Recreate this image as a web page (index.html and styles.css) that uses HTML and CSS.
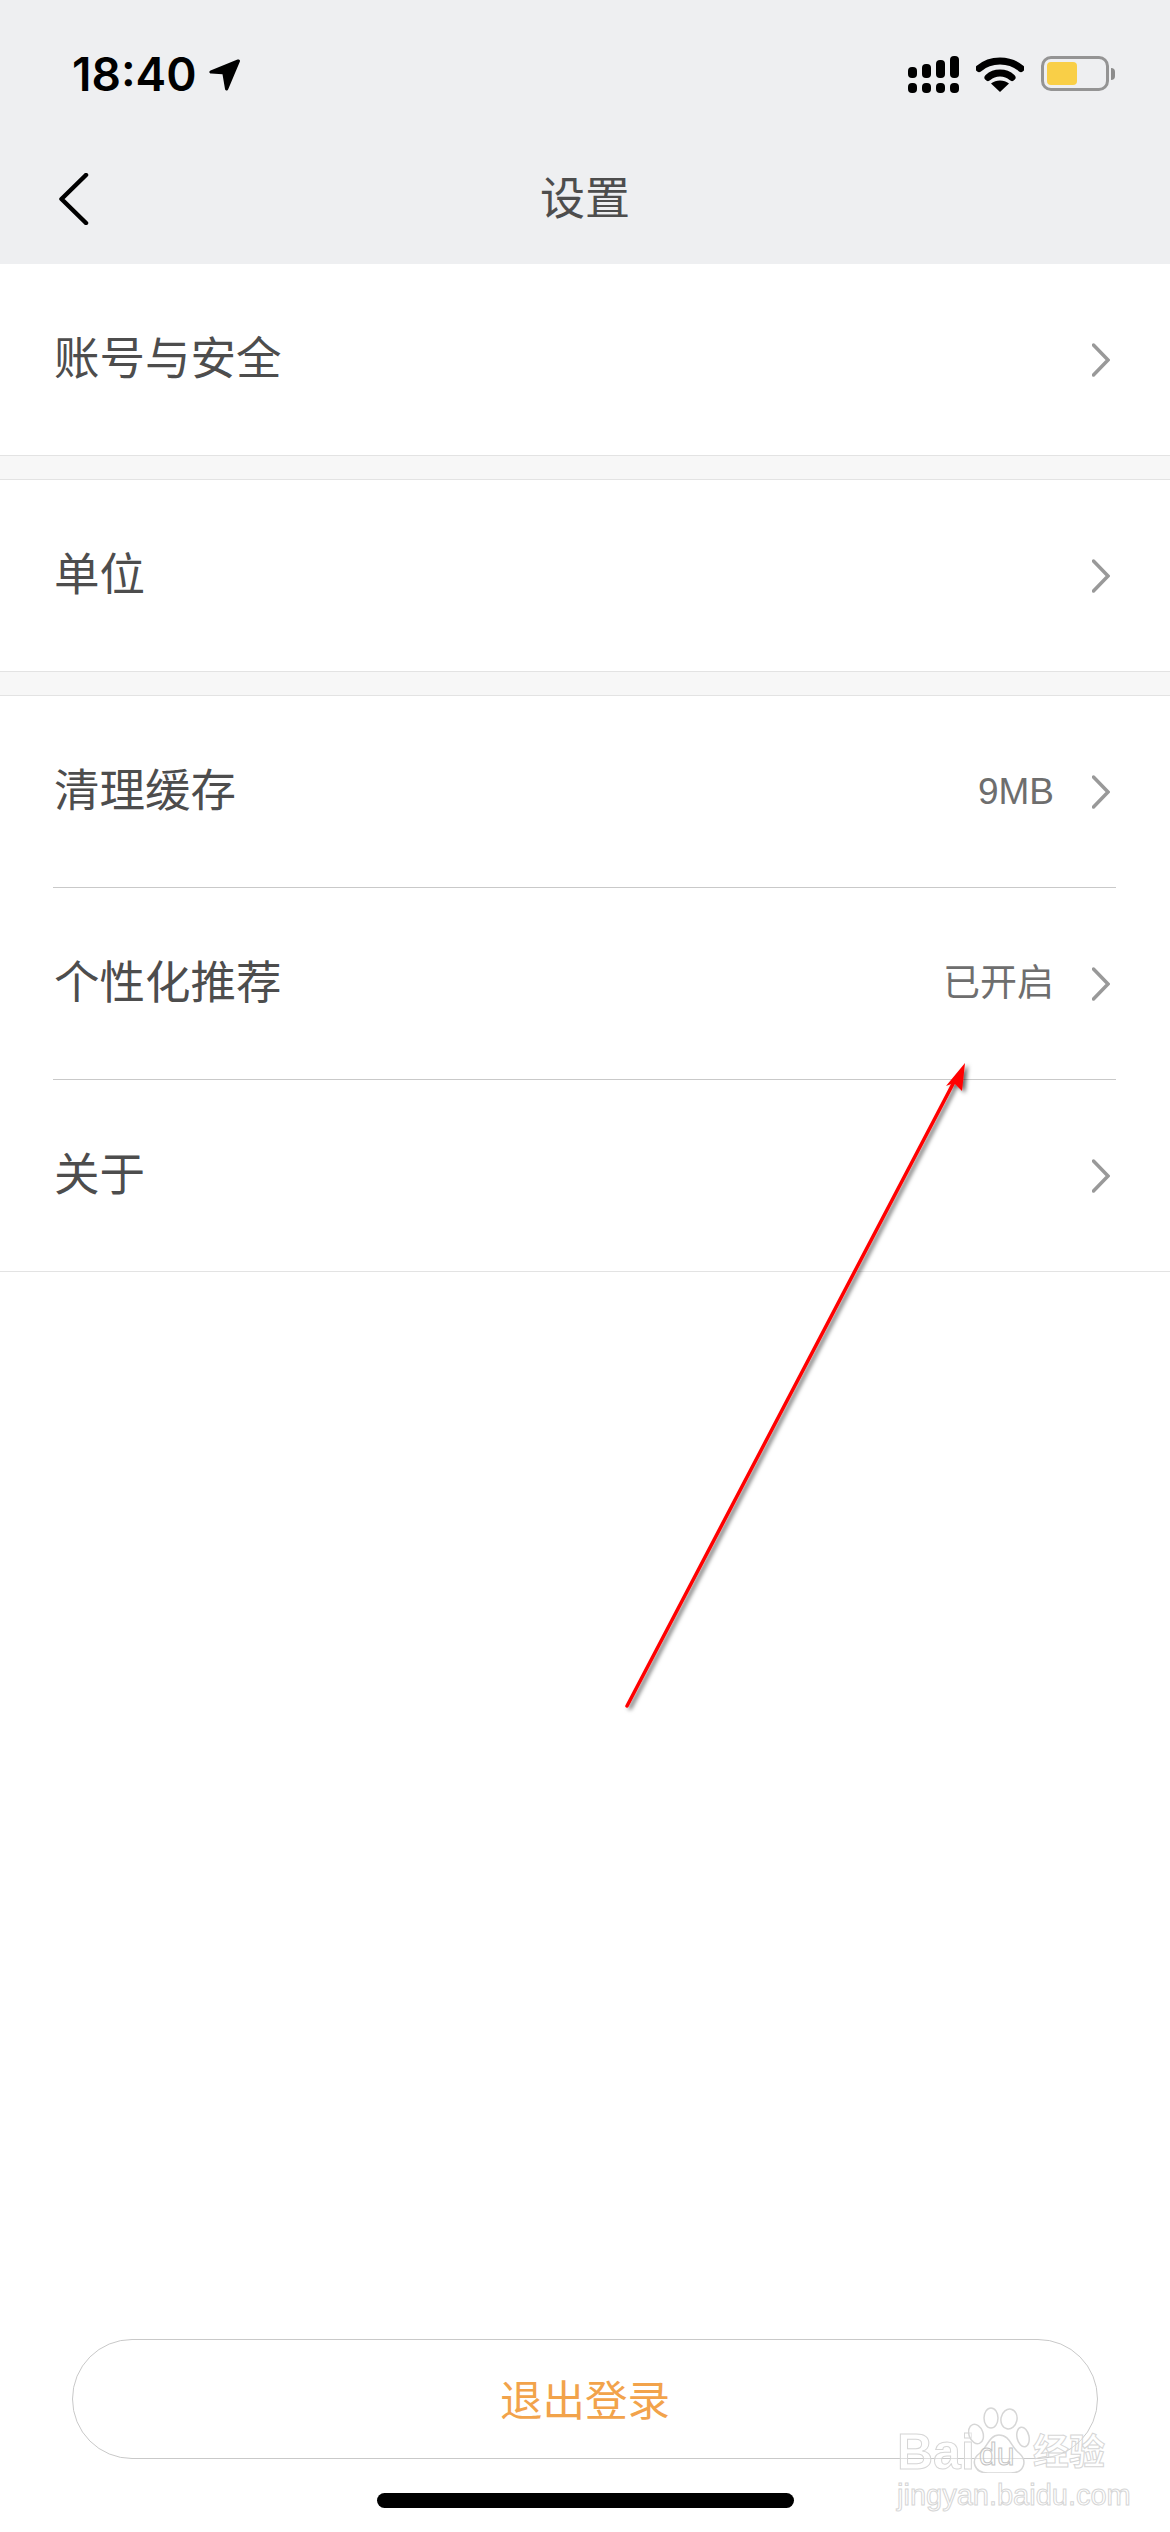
FILE: index.html
```html
<!DOCTYPE html>
<html lang="zh-CN">

<head>
    <meta charset="UTF-8">
    <meta name="viewport" content="width=device-width, initial-scale=1.0">
    <title>设置</title>
    <link rel="stylesheet" href="styles.css">
</head>

<body>
    <header class="top">
        <div class="status">
            <div class="status-left">
                <span class="time">18:40</span>
                <svg class="loc" viewBox="0 0 31 32" width="31" height="32">
                    <path d="M28.500.6 1.500 11.500c-1.900.8-1.400 3 .6 3.100l11.400.6 2.500 14.800c.3 1.900 2.600 2 3.200.2L30.900 2.600C31.400 1 30 0 28.500.6Z" />
                </svg>
            </div>
            <div class="status-right">
                <svg class="signal" viewBox="0 0 51 37" width="51" height="37">
                    <rect x="0" y="11" width="9" height="11" rx="4" />
                    <rect x="14" y="8" width="9" height="14" rx="4" />
                    <rect x="28" y="4" width="9" height="18" rx="4" />
                    <rect x="42" y="0" width="9" height="22" rx="4" />
                    <rect x="0" y="27" width="9" height="10" rx="4" />
                    <rect x="14" y="27" width="9" height="10" rx="4" />
                    <rect x="28" y="27" width="9" height="10" rx="4" />
                    <rect x="42" y="27" width="9" height="10" rx="4" />
                </svg>
                <svg class="wifi" viewBox="0 0 48 36" width="48" height="36">
                    <path d="M3 12.500C14.500 2.500 33.500 2.500 45 12.500" />
                    <path d="M12 21.500C18.500 15.500 29.500 15.500 36 21.500" />
                    <path class="wifi-dot" d="M24 36 15 27.500C20 23.500 28 23.500 33 27.500Z" />
                </svg>
                <div class="battery">
                    <div class="battery-body"><div class="battery-fill"></div></div>
                    <div class="battery-nub"></div>
                </div>
            </div>
        </div>
        <nav class="bar">
            <svg class="back" viewBox="0 0 30 52" width="30" height="52">
                <path d="M27 2 2.500 26 27 50" />
            </svg>
            <span class="bar-title">设置</span>
        </nav>
    </header>

    <section class="group">
        <div class="row">
            <span class="label">账号与安全</span>
            <svg class="chev" viewBox="0 0 18 34" width="18" height="34"><path d="M1.500 2 16 17 1.500 32" /></svg>
        </div>
    </section>
    <div class="gap"></div>
    <section class="group">
        <div class="row">
            <span class="label">单位</span>
            <svg class="chev" viewBox="0 0 18 34" width="18" height="34"><path d="M1.500 2 16 17 1.500 32" /></svg>
        </div>
    </section>
    <div class="gap"></div>
    <section class="group">
        <div class="row line">
            <span class="label">清理缓存</span>
            <span class="value">9MB</span>
            <svg class="chev" viewBox="0 0 18 34" width="18" height="34"><path d="M1.500 2 16 17 1.500 32" /></svg>
        </div>
        <div class="row line">
            <span class="label">个性化推荐</span>
            <span class="value">已开启</span>
            <svg class="chev" viewBox="0 0 18 34" width="18" height="34"><path d="M1.500 2 16 17 1.500 32" /></svg>
        </div>
        <div class="row">
            <span class="label">关于</span>
            <svg class="chev" viewBox="0 0 18 34" width="18" height="34"><path d="M1.500 2 16 17 1.500 32" /></svg>
        </div>
    </section>

    <div class="foot">
        <button class="logout">退出登录</button>
        <div class="home"></div>
    </div>

    <!-- red arrow someone drew on the screenshot -->
    <svg class="mark" viewBox="0 0 1170 2532" width="1170" height="2532">
        <defs>
            <filter id="drop" x="-10%" y="-10%" width="120%" height="120%">
                <feDropShadow dx="3" dy="2" stdDeviation="2" flood-color="#000" flood-opacity="0.6" />
            </filter>
        </defs>
        <g filter="url(#drop)">
            <path class="mark-line" d="M627 1706 955 1080" />
            <path class="mark-head" d="M965 1063 962 1091 954 1083 946 1086Z" />
        </g>
    </svg>

    <div class="wm">
        <div class="wm-top">
            <span class="wm-bai">Bai</span>
            <div class="wm-paw">
                <svg viewBox="0 0 62 66" width="62" height="66">
                    <ellipse cx="8" cy="27" rx="7" ry="10" transform="rotate(-20 8 27)" />
                    <ellipse cx="23" cy="11" rx="7" ry="10" />
                    <ellipse cx="41" cy="12" rx="8" ry="10" transform="rotate(12 41 12)" />
                    <ellipse cx="55" cy="30" rx="6" ry="10" transform="rotate(-12 55 30)" />
                    <path d="M31 28C21 28 19 41 12 46 2 53 6 66 20 66 27 66 35 66 43 66 56 66 60 54 51 46 43 40 42 28 31 28Z" />
                </svg>
                <span class="wm-du">du</span>
            </div>
            <span class="wm-cn">经验</span>
        </div>
        <div class="wm-url">jingyan.baidu.com</div>
    </div>
</body>

</html>
```

FILE: styles.css
```css
* {
    margin: 0;
    box-sizing: border-box;
}

body {
    width: 1170px;
    height: 2532px;
    background-color: #ffffff;
    color: #4d4d4d;
    font-family: "Liberation Sans", "Noto Sans CJK SC", sans-serif;
    display: flex;
    flex-direction: column;
    position: relative;
    overflow: hidden;
}

.top {
    height: 264px;
    background-color: #eeeff1;
    flex-shrink: 0;
}

.status {
    height: 148px;
    padding: 56px 55px 0 72px;
    display: flex;
    justify-content: space-between;
    align-items: flex-start;
}

.status-left {
    display: flex;
    align-items: center;
    gap: 12px;
}

.time {
    font-family: Inter, sans-serif;
    font-size: 46px;
    font-weight: 600;
    line-height: 37px;
    color: #000;
}

.loc path {
    fill: #000;
}

.status-right {
    display: flex;
    align-items: flex-start;
    gap: 17px;
}

.signal rect {
    fill: #000;
}

.wifi path {
    fill: none;
    stroke: #000;
    stroke-width: 7px;
    stroke-linecap: round;
}

.wifi .wifi-dot {
    fill: #000;
    stroke: none;
}

.battery {
    display: flex;
    align-items: center;
    gap: 2px;
}

.battery-body {
    width: 68px;
    height: 35px;
    border: 3px solid #949494;
    border-radius: 10px;
    padding: 3px;
}

.battery-fill {
    width: 30px;
    height: 100%;
    background-color: #f9cf47;
    border-radius: 4px;
}

.battery-nub {
    width: 4px;
    height: 12px;
    background-color: #8c8c8c;
    border-radius: 0 6px 6px 0;
}

.bar {
    height: 116px;
    position: relative;
    display: flex;
    align-items: center;
    justify-content: center;
}

.back {
    position: absolute;
    left: 59px;
    top: 25px;
}

.back path {
    fill: none;
    stroke: #000;
    stroke-width: 4.500px;
    stroke-linecap: round;
    stroke-linejoin: round;
}

.bar-title {
    font-size: 45px;
    line-height: 60px;
    padding-bottom: 12px;
}

.group {
    border-bottom: 1px solid #e3e3e3;
    flex-shrink: 0;
}

.gap {
    height: 24px;
    background-color: #f7f7f7;
    border-bottom: 1px solid #e3e3e3;
    flex-shrink: 0;
}

.row {
    height: 191px;
    margin: 0 54px 0 53px;
    display: flex;
    align-items: center;
}

.row.line {
    height: 192px;
    border-bottom: 1px solid #c9c9c9;
}

.label {
    font-size: 45.500px;
    line-height: 60px;
    padding-left: 1px;
    flex: 1;
}

.value {
    font-size: 37px;
    line-height: 50px;
    color: #6e6e6e;
    margin-right: 38px;
}

.chev {
    margin-right: 6px;
}

.chev path {
    fill: none;
    stroke: #999999;
    stroke-width: 3.500px;
    stroke-linecap: round;
}

.foot {
    margin-top: auto;
    padding: 0 72px 24px;
    display: flex;
    flex-direction: column;
    align-items: center;
    gap: 34px;
}

.logout {
    width: 1026px;
    height: 120px;
    background: #fff;
    border: 1px solid #c9c9c9;
    border-radius: 60px;
    color: #f2a34b;
    font-family: inherit;
    font-size: 42.500px;
    padding-bottom: 4px;
}

.home {
    width: 417px;
    height: 15px;
    background-color: #000;
    border-radius: 8px;
}

.mark {
    position: absolute;
    left: 0;
    top: 0;
    pointer-events: none;
}

.mark-line {
    fill: none;
    stroke: #ff0000;
    stroke-width: 3.500px;
    stroke-linecap: round;
}

.mark-head {
    fill: #ff0000;
}

/* baidu watermark, outline only */
.wm {
    position: absolute;
    left: 897px;
    top: 2407px;
    width: 210px;
    color: rgba(255, 255, 255, 0.4);
    -webkit-text-stroke: 1px #d6d6d6;
}

.wm-top {
    display: flex;
    align-items: flex-end;
    height: 66px;
}

.wm-bai {
    font-size: 50px;
    font-weight: 700;
    line-height: 42px;
    width: 71px;
}

.wm-paw {
    position: relative;
    width: 62px;
    height: 66px;
}

.wm-paw ellipse,
.wm-paw path {
    fill: rgba(255, 255, 255, 0.4);
    stroke: #d6d6d6;
    stroke-width: 1.500px;
}

.wm-du {
    position: absolute;
    left: 11px;
    bottom: 3px;
    font-size: 32px;
    line-height: 32px;
    -webkit-text-stroke: 1px #c4c4c4;
}

.wm-cn {
    font-size: 36px;
    font-weight: 700;
    line-height: 40px;
    margin-left: 3px;
    white-space: nowrap;
}

.wm-url {
    font-size: 29px;
    line-height: 34px;
    margin-top: 5px;
    white-space: nowrap;
}
```
